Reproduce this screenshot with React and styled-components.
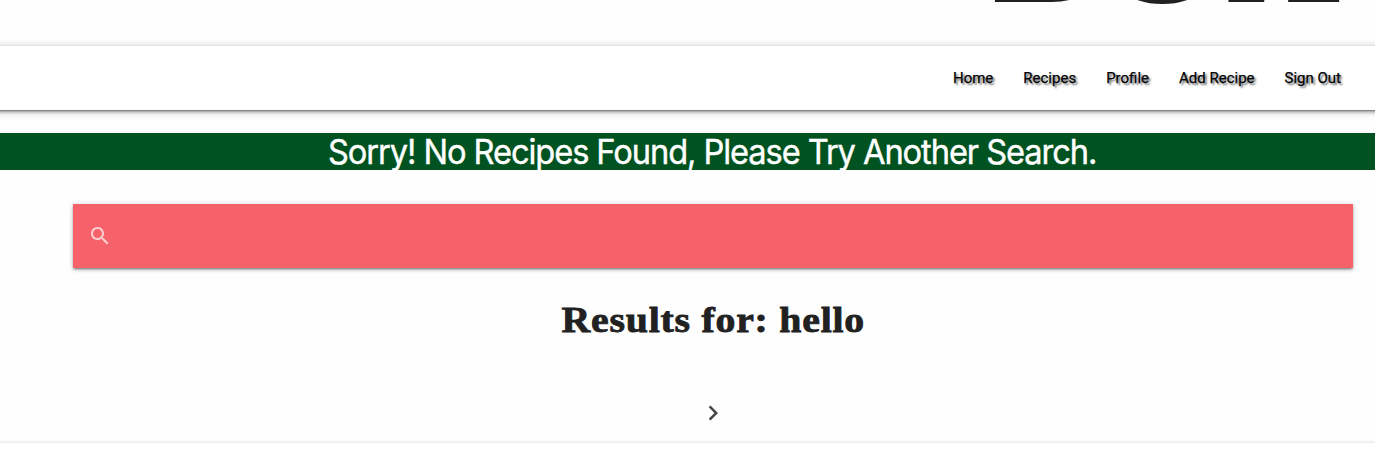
import React from 'react';
import styled, { createGlobalStyle } from 'styled-components';

const Global = createGlobalStyle`
  *, *::before, *::after { box-sizing: border-box; }
  body { margin: 0; background: #fefefe; overflow: hidden; color: #212121; }
`;

const depth = '0 2px 2px 0 rgba(0,0,0,.2), 0 3px 1px -2px rgba(0,0,0,.15), 0 1px 5px 0 rgba(0,0,0,.24)';

const Page = styled.div`
  height: 475px;
  display: flex;
  flex-direction: column;
  overflow: hidden;
`;

const Header = styled.header`
  height: 46px;
  flex: none;
  display: flex;
  align-items: flex-start;
  justify-content: flex-end;
  padding-right: 34px;
  overflow: hidden;
`;

const Title = styled.h1`
  margin: -132px -1px 0 0;
  font: 700 160px/160px 'Liberation Serif', serif;
  letter-spacing: 1px;
  white-space: nowrap;
  color: #212121;
`;

const Nav = styled.nav`
  height: 64px;
  flex: none;
  display: flex;
  align-items: center;
  justify-content: flex-end;
  gap: 30px;
  margin: 0 -10px;
  padding-right: 44px;
  background: #fff;
  box-shadow: 0 2px 3px 0 rgba(0,0,0,.28), 0 3px 1px -2px rgba(0,0,0,.2), 0 1px 8px 0 rgba(0,0,0,.26);
`;

const NavLink = styled.a`
  font: 400 15px/64px Roboto, sans-serif;
  color: #000;
  -webkit-text-stroke: 0.25px #000;
  text-shadow: 2px 2px 2px rgba(0,0,0,.6);
  white-space: nowrap;
`;

const Notice = styled.div`
  height: 37px;
  flex: none;
  margin-top: 23px;
  padding-left: 50px;
  background: #005220;
  color: #fff;
  text-align: center;
  font: 400 34px/38px Inter, sans-serif;
  letter-spacing: -1.13px;
  -webkit-text-stroke: 0.4px #fff;
  white-space: nowrap;
`;

const Stretch = styled.span`
  display: inline-block;
  transform: scaleX(${(p) => p.$x});
`;

const SearchBar = styled.div`
  height: 64px;
  flex: none;
  margin: 34px 22px 0 73px;
  padding-left: 15px;
  display: flex;
  align-items: center;
  background: #f6626a;
  box-shadow: ${depth};
`;

const SearchIcon = styled.svg`
  width: 24px;
  height: 24px;
  fill: rgba(255,255,255,.7);
`;

const Results = styled.h2`
  margin: 29px 0 0;
  padding-left: 51px;
  height: 47px;
  font: 700 36px/47px 'Liberation Serif', serif;
  letter-spacing: 0.7px;
  -webkit-text-stroke: 0.8px #212121;
  text-align: center;
  white-space: nowrap;
`;

const Pagination = styled.div`
  display: flex;
  justify-content: center;
  margin-top: 54px;
  padding-left: 51px;
  height: 45px;
  flex: none;
`;

const Chevron = styled.svg`
  width: 30px;
  height: 30px;
  fill: #444;
`;

const Footer = styled.footer`
  flex: 1;
  margin: 0 -10px;
  background: #fff;
  box-shadow: ${depth};
`;

const links = ['Home', 'Recipes', 'Profile', 'Add Recipe', 'Sign Out'];

export default function App() {
  return (
    <Page>
      <Global />
      <Header><Title>BOX</Title></Header>
      <Nav>{links.map((label) => <NavLink key={label}>{label}</NavLink>)}</Nav>
      <Notice><Stretch $x={0.96}>Sorry! No Recipes Found, Please Try Another Search.</Stretch></Notice>
      <SearchBar>
        <SearchIcon viewBox="0 0 24 24">
          <path d="M15.5 14h-.79l-.28-.27C15.41 12.59 16 11.11 16 9.5 16 5.91 13.09 3 9.5 3S3 5.91 3 9.5 5.91 16 9.5 16c1.61 0 3.09-.59 4.23-1.57l.27.28v.79l5 4.99L20.49 19l-4.99-5zm-6 0C7.01 14 5 11.99 5 9.5S7.01 5 9.5 5 14 7.01 14 9.5 11.99 14 9.5 14z" />
        </SearchIcon>
      </SearchBar>
      <Results><Stretch $x={1.105}>Results for: hello</Stretch></Results>
      <Pagination>
        <Chevron viewBox="0 0 24 24">
          <path d="M10 6L8.59 7.41 13.17 12l-4.58 4.59L10 18l6-6z" />
        </Chevron>
      </Pagination>
      <Footer />
    </Page>
  );
}
